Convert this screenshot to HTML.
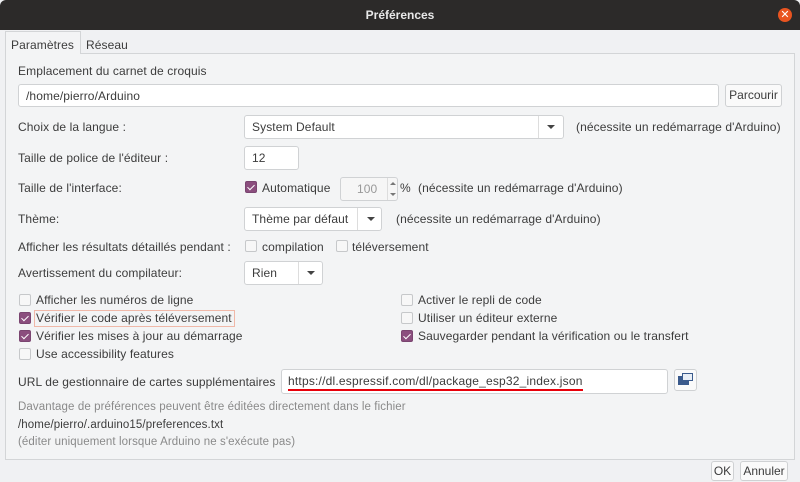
<!DOCTYPE html>
<html><head><meta charset="utf-8"><style>
*{box-sizing:border-box;margin:0;padding:0}
body{width:800px;height:482px;background:#f0f1f3;font-family:"Liberation Sans",sans-serif;font-size:12px;color:#3c3c3c;position:relative;overflow:hidden}
.a{position:absolute;white-space:nowrap}
.t{position:absolute;white-space:nowrap;line-height:14px;letter-spacing:0.1px}
.box{position:absolute;background:#fff;border:1px solid #d0d2d4;border-radius:3px}
.cb{position:absolute;width:12px;height:12px;border:1px solid #c6c8ca;border-radius:2px;background:#f7f7f7}
.cb.on{background:#8b4e7e;border-color:#7a4570}
.cb.on:after{content:"";position:absolute;left:3px;top:1px;width:3px;height:6px;border:solid #fff;border-width:0 1.5px 1.5px 0;transform:rotate(45deg)}
.arr{position:absolute;width:0;height:0;border-left:4px solid transparent;border-right:4px solid transparent;border-top:4px solid #444}
.up{position:absolute;width:0;height:0;border-left:3px solid transparent;border-right:3px solid transparent;border-bottom:3px solid #777}
.dn{position:absolute;width:0;height:0;border-left:3px solid transparent;border-right:3px solid transparent;border-top:3px solid #777}
.btn{position:absolute;background:#fafafa;border:1px solid #cfd1d3;border-radius:3px;text-align:center;line-height:20px}
</style></head><body>
<div class="a" style="left:0;top:0;width:800px;height:30px;background:#2c2a29;border-radius:6px 6px 0 0"></div>
<div class="a" style="left:0;top:8px;width:800px;text-align:center;color:#e8e8e8;font-weight:bold;font-size:12px">Préférences</div>
<div class="a" style="left:778px;top:8px;width:14px;height:14px;border-radius:7px;background:#e95420;color:#fff;font-size:11px;line-height:14px;text-align:center">✕</div>

<div class="a" style="left:5px;top:53px;width:790px;height:407px;border:1px solid #d3d5d7;background:#f3f4f5"></div>
<div class="a" style="left:5px;top:31px;width:76px;height:23px;border:1px solid #d3d5d7;border-bottom:none;background:#f3f4f5"></div>
<div class="t" style="left:11px;top:38px">Paramètres</div>
<div class="t" style="left:86px;top:38px">Réseau</div>

<div class="t" style="left:18px;top:64px">Emplacement du carnet de croquis</div>
<div class="box" style="left:18px;top:84px;width:701px;height:23px"></div>
<div class="t" style="left:26px;top:89px">/home/pierro/Arduino</div>
<div class="btn" style="left:725px;top:84px;width:57px;height:23px">Parcourir</div>

<div class="t" style="left:18px;top:120px">Choix de la langue :</div>
<div class="box" style="left:244px;top:115px;width:320px;height:24px"></div>
<div class="a" style="left:538px;top:116px;width:1px;height:22px;background:#ddd"></div>
<div class="arr" style="left:547px;top:125px"></div>
<div class="t" style="left:252px;top:120px">System Default</div>
<div class="t" style="left:576px;top:120px">(nécessite un redémarrage d'Arduino)</div>

<div class="t" style="left:18px;top:151px">Taille de police de l'éditeur :</div>
<div class="box" style="left:244px;top:146px;width:55px;height:24px"></div>
<div class="t" style="left:252px;top:151px">12</div>

<div class="t" style="left:18px;top:181px">Taille de l'interface:</div>
<div class="cb on" style="left:245px;top:181px"></div>
<div class="t" style="left:262px;top:181px">Automatique</div>
<div class="box" style="left:340px;top:177px;width:58px;height:24px;background:#f6f6f6"></div>
<div class="t" style="left:357px;top:182px;color:#999">100</div>
<div class="a" style="left:387px;top:178px;width:1px;height:22px;background:#ddd"></div>
<div class="up" style="left:390px;top:182px"></div>
<div class="dn" style="left:390px;top:193px"></div>
<div class="t" style="left:400px;top:181px">%</div>
<div class="t" style="left:418px;top:181px">(nécessite un redémarrage d'Arduino)</div>

<div class="t" style="left:18px;top:212px">Thème:</div>
<div class="box" style="left:244px;top:207px;width:138px;height:24px"></div>
<div class="a" style="left:357px;top:208px;width:1px;height:22px;background:#ddd"></div>
<div class="arr" style="left:367px;top:217px"></div>
<div class="t" style="left:252px;top:212px">Thème par défaut</div>
<div class="t" style="left:396px;top:212px">(nécessite un redémarrage d'Arduino)</div>

<div class="t" style="left:18px;top:240px">Afficher les résultats détaillés pendant :</div>
<div class="cb" style="left:245px;top:240px"></div>
<div class="t" style="left:262px;top:240px">compilation</div>
<div class="cb" style="left:336px;top:240px"></div>
<div class="t" style="left:352px;top:240px">téléversement</div>

<div class="t" style="left:18px;top:266px">Avertissement du compilateur:</div>
<div class="box" style="left:244px;top:261px;width:79px;height:24px"></div>
<div class="a" style="left:298px;top:262px;width:1px;height:22px;background:#ddd"></div>
<div class="arr" style="left:307px;top:271px"></div>
<div class="t" style="left:252px;top:266px">Rien</div>

<div class="cb" style="left:19px;top:294px"></div><div class="t" style="left:36px;top:293px">Afficher les numéros de ligne</div>
<div class="cb on" style="left:19px;top:312px"></div>
<div class="a" style="left:34px;top:310px;width:201px;height:17px;border:1px solid #f0b8a8"></div>
<div class="t" style="left:36px;top:311px">Vérifier le code après téléversement</div>
<div class="cb on" style="left:19px;top:330px"></div><div class="t" style="left:36px;top:329px">Vérifier les mises à jour au démarrage</div>
<div class="cb" style="left:19px;top:348px"></div><div class="t" style="left:36px;top:347px">Use accessibility features</div>

<div class="cb" style="left:401px;top:294px"></div><div class="t" style="left:418px;top:293px">Activer le repli de code</div>
<div class="cb" style="left:401px;top:312px"></div><div class="t" style="left:418px;top:311px">Utiliser un éditeur externe</div>
<div class="cb on" style="left:401px;top:330px"></div><div class="t" style="left:418px;top:329px">Sauvegarder pendant la vérification ou le transfert</div>

<div class="t" style="left:18px;top:375px">URL de gestionnaire de cartes supplémentaires</div>
<div class="box" style="left:281px;top:369px;width:387px;height:25px"></div>
<div class="t" style="left:288px;top:374px;letter-spacing:0.2px">https://dl.espressif.com/dl/package_esp32_index.json</div>
<div class="a" style="left:288px;top:389px;width:295px;height:2px;background:#e8000a"></div>
<div class="btn" style="left:674px;top:369px;width:23px;height:22px"></div>
<div class="a" style="left:678px;top:376px;width:11px;height:9px;background:#3a5a8c"></div>
<div class="a" style="left:682px;top:373px;width:11px;height:8px;border:1.5px solid #3a5a8c;background:#e8eef6"></div>

<div class="t" style="left:18px;top:400px;color:#8a8a8a;font-size:11.5px">Davantage de préférences peuvent être éditées directement dans le fichier</div>
<div class="t" style="left:18px;top:418px;font-size:11.5px">/home/pierro/.arduino15/preferences.txt</div>
<div class="t" style="left:18px;top:435px;color:#8a8a8a;font-size:11.5px">(éditer uniquement lorsque Arduino ne s'exécute pas)</div>

<div class="btn" style="left:711px;top:461px;width:23px;height:20px;line-height:18px">OK</div>
<div class="btn" style="left:740px;top:461px;width:48px;height:20px;line-height:18px">Annuler</div>
</body></html>
